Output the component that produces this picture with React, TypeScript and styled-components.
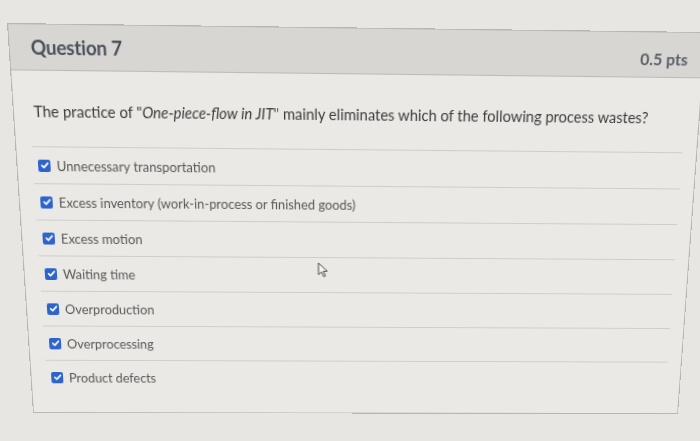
import React from "react";
import styled, { createGlobalStyle } from "styled-components";

const GlobalStyle = createGlobalStyle`
  html, body {
    margin: 0;
    padding: 0;
    width: 700px;
    height: 441px;
    overflow: hidden;
    background: #e8e6e3;
    font-family: Lato, "Open Sans", sans-serif;
  }
  #root { width: 700px; height: 441px; }
`;

const W = 672;
const H = 389;

// target corners in the screenshot: TL, TR, BR, BL
const quad: [number, number][] = [
  [7, 23],
  [706, 32],
  [678, 414],
  [33, 413],
];

function homography(): string {
  const [[x0, y0], [x1, y1], [x2, y2], [x3, y3]] = quad;
  const dx1 = x1 - x2, dx2 = x3 - x2, dx3 = x0 - x1 + x2 - x3;
  const dy1 = y1 - y2, dy2 = y3 - y2, dy3 = y0 - y1 + y2 - y3;
  const det = dx1 * dy2 - dx2 * dy1;
  const g = (dx3 * dy2 - dx2 * dy3) / det;
  const h = (dx1 * dy3 - dx3 * dy1) / det;
  const a = x1 - x0 + g * x1;
  const b = x3 - x0 + h * x3;
  const c = x0;
  const d = y1 - y0 + g * y1;
  const e = y3 - y0 + h * y3;
  const f = y0;
  const m = [
    a / W, d / W, 0, g / W,
    b / H, e / H, 0, h / H,
    0, 0, 1, 0,
    c, f, 0, 1,
  ];
  return `matrix3d(${m.join(",")})`;
}

const Card = styled.section`
  position: relative;
  box-sizing: border-box;
  width: ${W}px;
  height: ${H}px;
  background: #ebe9e6;
  border: 1px solid #b8b6b3;
  transform-origin: 0 0;
  display: flex;
  flex-direction: column;
`;

const Header = styled.header`
  box-sizing: border-box;
  height: 43px;
  background: #d8d6d3;
  border-bottom: 1px solid #bdbbb8;
  display: flex;
  align-items: center;
  justify-content: space-between;
  padding: 0 15px 0 20px;
`;

const Title = styled.h2`
  margin: 0;
  font-size: 18px;
  font-weight: 700;
  color: #4b505d;
  letter-spacing: -0.2px;
`;

const Points = styled.span`
  font-size: 15.5px;
  font-weight: 700;
  color: #5a5e68;
  padding-top: 8px;
`;

const Body = styled.div`
  padding: 30px 14px 0 15px;
  display: flex;
  flex-direction: column;
`;

const QuestionText = styled.p`
  margin: 0 0 0 4px;
  font-size: 14.5px;
  line-height: 18px;
  color: #3c3c3c;
  white-space: nowrap;
`;

const Answers = styled.div`
  margin-top: 24px;
  display: flex;
  flex-direction: column;
`;

const Answer = styled.label`
  box-sizing: border-box;
  height: 36px;
  border-top: 1px solid #cfcdca;
  display: flex;
  align-items: center;
  gap: 6px;
  padding-left: 5px;
  font-size: 12.8px;
  color: #585858;
`;

const Box = styled.span`
  width: 12px;
  height: 12px;
  border-radius: 2px;
  background: #2c64cc;
  display: inline-flex;
  align-items: center;
  justify-content: center;
  flex: none;
`;

const Cursor = styled.svg`
  position: absolute;
  left: 293px;
  top: 228px;
  width: 11px;
  height: 16px;
`;

const answers = [
  "Unnecessary transportation",
  "Excess inventory (work-in-process or finished goods)",
  "Excess motion",
  "Waiting time",
  "Overproduction",
  "Overprocessing",
  "Product defects",
];

export default function App() {
  return (
    <>
      <GlobalStyle />
      <Card style={{ transform: homography() }}>
        <Header>
          <Title>Question 7</Title>
          <Points>0.5 pts</Points>
        </Header>
        <Body>
          <QuestionText>
            The practice of "<em>One-piece-flow in JIT</em>" mainly eliminates which of the following process wastes?
          </QuestionText>
          <Answers>
            {answers.map((a) => (
              <Answer key={a}>
                <Box>
                  <svg width="9" height="9" viewBox="0 0 10 10">
                    <path d="M1.8 5.2 L4 7.4 L8.3 2.6" fill="none" stroke="#fff" strokeWidth="1.8" strokeLinecap="round" strokeLinejoin="round" />
                  </svg>
                </Box>
                {a}
              </Answer>
            ))}
          </Answers>
        </Body>
        <Cursor viewBox="0 0 11 16">
          <path d="M1 1 L1 13 L4 10.2 L6.2 15 L8 14.2 L5.9 9.5 L10 9.5 Z" fill="#f4f3f1" stroke="#4a4a4a" strokeWidth="1" strokeLinejoin="round" />
        </Cursor>
      </Card>
    </>
  );
}
